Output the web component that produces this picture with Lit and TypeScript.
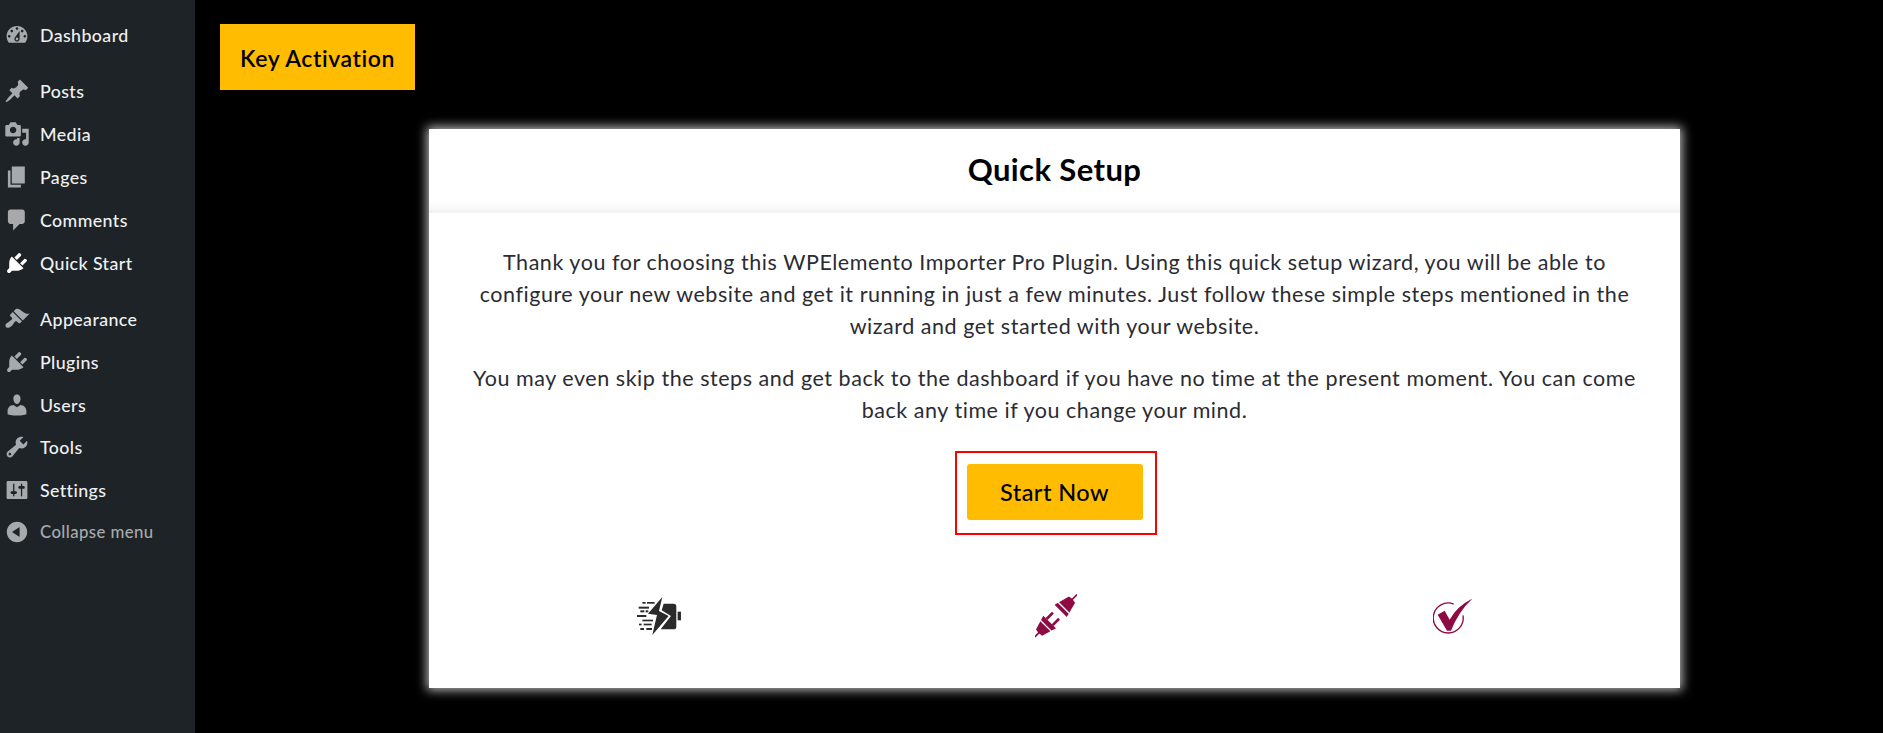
import { LitElement, html, css, svg } from "lit";
import { customElement } from "lit/decorators.js";

type Item = { label: string; d: string; cls?: string };
const P = {
  dash: "M3.76 16h12.48c1.1-1.37 1.76-3.11 1.76-5 0-4.42-3.58-8-8-8s-8 3.58-8 8c0 1.89.66 3.63 1.76 5zM10 4c.55 0 1 .45 1 1s-.45 1-1 1-1-.45-1-1 .45-1 1-1zM6 6c.55 0 1 .45 1 1s-.45 1-1 1-1-.45-1-1 .45-1 1-1zm8 0c.55 0 1 .45 1 1s-.45 1-1 1-1-.45-1-1 .45-1 1-1zm-5.37 5.55L12 7v6c0 1.1-.9 2-2 2s-2-.9-2-2c0-.57.24-1.08.63-1.45zM4 10c.55 0 1 .45 1 1s-.45 1-1 1-1-.45-1-1 .45-1 1-1zm12 0c.55 0 1 .45 1 1s-.45 1-1 1-1-.45-1-1 .45-1 1-1zm-5 3c0-.55-.45-1-1-1s-1 .45-1 1 .45 1 1 1 1-.45 1-1z",
  post: "M10.44 3.02l1.82-1.82 6.36 6.35-1.83 1.82c-1.05-.68-2.48-.57-3.41.36l-.75.75c-.92.93-1.04 2.35-.35 3.41l-1.83 1.82-2.41-2.41-2.8 2.79c-.42.42-3.38 2.71-3.8 2.29s1.86-3.39 2.28-3.81l2.79-2.79L4.1 9.36l1.83-1.82c1.05.69 2.48.57 3.4-.36l.75-.75c.93-.92 1.05-2.35.36-3.41z",
  media: "M13 11V4c0-.55-.45-1-1-1h-1.67L9 1H5L3.67 3H2c-.55 0-1 .45-1 1v7c0 .55.45 1 1 1h10c.55 0 1-.45 1-1zM7 4.5c1.38 0 2.5 1.12 2.5 2.5S8.38 9.5 7 9.5 4.5 8.38 4.5 7 5.62 4.5 7 4.5zM14 6h5v10.5c0 1.38-1.12 2.5-2.5 2.5S14 17.88 14 16.5s1.12-2.5 2.5-2.5c.17 0 .34.02.5.05V9h-3V6zm-4 8.05V13h2v3.5c0 1.38-1.12 2.5-2.5 2.5S7 17.88 7 16.5 8.12 14 9.5 14c.17 0 .34.02.5.05z",
  page: "M6 15V2h10v13H6zm-1 1h8v2H3V5h2v11z",
  comment: "M5 2h9c1.1 0 2 .9 2 2v7c0 1.1-.9 2-2 2h-2l-5 5v-5H5c-1.1 0-2-.9-2-2V4c0-1.1.9-2 2-2z",
  plugin: "M13.11 4.36L9.87 7.6 8 5.73l3.24-3.24c.35-.34 1.05-.2 1.56.32.52.51.66 1.21.31 1.55zm-8 1.77l.91-1.12 9.01 9.01-1.19.84c-.71.71-2.63 1.16-3.82 1.16H6.14L4.9 17.26c-.59.59-1.54.59-2.12 0-.59-.58-.59-1.53 0-2.12l1.24-1.24v-3.88c0-1.13.4-3.19 1.09-3.89zm7.26 3.97l3.24-3.24c.34-.35 1.04-.21 1.55.31.52.51.66 1.21.31 1.55l-3.24 3.25z",
  appearance: "M14.48 11.06L7.41 3.99l1.5-1.5c.5-.56 2.3-.47 3.51.32 1.21.8 1.43 1.28 2.91 2.1 1.18.64 2.45 1.26 4.45.85zm-.71.71L6.7 4.7 4.93 6.47c-.39.39-.39 1.02 0 1.41l1.06 1.06c.39.39.39 1.03 0 1.42-.6.6-1.43 1.11-2.21 1.69-.35.26-.7.53-1.01.84C1.43 13.23.5 15.13 1.65 16.28c1.16 1.16 3.05.22 4.4-1.12.31-.31.58-.66.84-1.01.58-.78 1.09-1.61 1.69-2.21.39-.39 1.02-.39 1.41 0l1.06 1.06c.39.39 1.02.39 1.41 0z",
  users: "M10 9.25c-2.27 0-2.73-3.44-2.73-3.44C7 4.02 7.82 2 9.97 2c2.16 0 2.98 2.02 2.71 3.81 0 0-.41 3.44-2.68 3.44zm0 2.57L12.72 10c2.39 0 4.52 2.33 4.52 4.53v2.49s-3.65 1.13-7.24 1.13c-3.65 0-7.24-1.13-7.24-1.13v-2.49c0-2.25 1.94-4.48 4.47-4.48z",
  tools: "M16.68 9.77c-1.34 1.34-3.3 1.67-4.95.99l-5.41 6.52c-.99.99-2.59.99-3.58 0s-.99-2.59 0-3.57l6.52-5.42c-.68-1.65-.35-3.61.99-4.95 1.28-1.28 3.12-1.62 4.72-1.06l-2.89 2.89 2.82 2.82 2.86-2.87c.53 1.58.18 3.39-1.08 4.65zM3.81 16.21c.4.39 1.04.39 1.43 0 .4-.4.4-1.04 0-1.43-.39-.4-1.03-.4-1.43 0-.39.39-.39 1.03 0 1.43z",
  settings: "M18 16V4c0-.55-.45-1-1-1H3c-.55 0-1 .45-1 1v12c0 .55.45 1 1 1h14c.55 0 1-.45 1-1zM8 11h1c.55 0 1 .45 1 1s-.45 1-1 1H8v1.5c0 .28-.22.5-.5.5s-.5-.22-.5-.5V13H6c-.55 0-1-.45-1-1s.45-1 1-1h1V5.5c0-.28.22-.5.5-.5s.5.22.5.5V11zm5-2h-1c-.55 0-1-.45-1-1s.45-1 1-1h1V5.5c0-.28.22-.5.5-.5s.5.22.5.5V7h1c.55 0 1 .45 1 1s-.45 1-1 1h-1v5.5c0 .28-.22.5-.5.5s-.5-.22-.5-.5V9z",
  collapse: "M10 2.16c4.33 0 7.84 3.51 7.84 7.84s-3.51 7.84-7.84 7.84S2.16 14.33 2.16 10 5.71 2.16 10 2.16zm2 11.72V6.12L6.18 9.97z",
};

const groups: Item[][] = [
  [{ label: "Dashboard", d: P.dash }],
  [
    { label: "Posts", d: P.post },
    { label: "Media", d: P.media },
    { label: "Pages", d: P.page },
    { label: "Comments", d: P.comment },
    { label: "Quick Start", d: P.plugin, cls: "cur" },
  ],
  [
    { label: "Appearance", d: P.appearance },
    { label: "Plugins", d: P.plugin },
    { label: "Users", d: P.users },
    { label: "Tools", d: P.tools },
    { label: "Settings", d: P.settings },
    { label: "Collapse menu", d: P.collapse, cls: "muted" },
  ],
];

@customElement("app-root")
export class AppRoot extends LitElement {
  static styles = css`
    :host { display: block; font-family: "Lato", "Noto Sans", sans-serif; }
    .page { display: flex; width: 1883px; height: 733px; background: #000; overflow: hidden; }
    .side { width: 195px; flex: none; background: #1d2327; padding-top: 14px; box-sizing: border-box; display: flex; flex-direction: column; gap: 13px; }
    .item { display: flex; align-items: center; height: 42.9px; color: #f0f0f1; font-size: 17.8px; font-weight: 500; letter-spacing: 0.4px; }
    .item svg { width: 26px; height: 26px; margin: 0 10px 0 4px; fill: #a7aaad; flex: none; }
    .item.cur svg { fill: #fff; }
    .item.muted { color: #a7aaad; font-size: 16.8px; height: 40px; }
    .main { flex: 1; min-width: 0; padding: 24px 0 0 25px; box-sizing: border-box; }
    .key { width: 195px; height: 66px; box-sizing: border-box; padding-top: 1px; background: #ffbc00; color: #000; font-size: 23px; font-weight: 600; letter-spacing: 0.58px; display: flex; align-items: center; justify-content: center; }
    .card { width: 1251px; height: 559px; margin: 39px 0 0 209px; background: #fff; box-shadow: 0 0 10px 2px rgba(255,255,255,.75); display: flex; flex-direction: column; }
    .head { height: 84px; flex: none; box-sizing: border-box; padding-bottom: 4px; display: flex; align-items: center; justify-content: center; font-size: 31px; font-weight: 700; color: #000; letter-spacing: 0.4px; box-shadow: inset 0 -14px 14px -14px rgba(0,0,0,.12); }
    .body { padding: 33px 30px 0; text-align: center; color: #2b2b33; font-size: 21.5px; line-height: 32px; letter-spacing: 0.54px; }
    .body p { margin: 0 0 20px; }
    .cta { display: flex; justify-content: center; }
    .redbox { border: 2px solid #f00; padding: 11px 12px 13px 10px; display: inline-flex; margin: 5px 0 0 2px; }
    .start { width: 176px; height: 56px; background: #ffbc00; border-radius: 3px; display: flex; align-items: center; justify-content: center; font-size: 23.5px; font-weight: 500; color: #000; letter-spacing: 0.45px; }
    .steps { display: grid; grid-template-columns: repeat(3, 396.5px); margin-top: 59px; padding-left: 32px; align-items: center; justify-items: center; height: 44px; }
    .s1 { width: 44.3px; height: 38px; fill: #2a2a2a; }
    .s2 { width: 42px; height: 43.3px; fill: #8e0a43; }
    .s3 { width: 39.3px; height: 36px; fill: #8e0a43; }
  `;

  render() {
    return html`<div class="page">
      <nav class="side">
        ${groups.map(
          (g) => html`<div>
            ${g.map(
              (i) => html`<div class="item ${i.cls ?? ""}">
                <svg viewBox="0 0 20 20"><path d=${i.d}></path></svg><span>${i.label}</span>
              </div>`
            )}
          </div>`
        )}
      </nav>
      <main class="main">
        <div class="key">Key Activation</div>
        <section class="card">
          <div class="head">Quick Setup</div>
          <div class="body">
            <p>Thank you for choosing this WPElemento Importer Pro Plugin. Using this quick setup wizard, you will be able to<br />configure your new website and get it running in just a few minutes. Just follow these simple steps mentioned in the<br />wizard and get started with your website.</p>
            <p>You may even skip the steps and get back to the dashboard if you have no time at the present moment. You can come<br />back any time if you change your mind.</p>
            <div class="cta"><div class="redbox"><div class="start">Start Now</div></div></div>
          </div>
          <div class="steps">
            <svg class="s1" viewBox="112 58 133 114">
              ${svg`<path d="M188 58 L145 108 L172 112 L158 172 L207 115 L178 100 Z"/>
              <path d="M192 78 H222 Q230 78 230 86 V147 Q230 155 222 155 H183 L214 115 L186 98 Z"/>
              <rect x="234" y="102" width="10" height="26"/>
              <rect x="128" y="73" width="10" height="5"/><rect x="142" y="73" width="23" height="5"/>
              <rect x="117" y="87" width="31" height="6"/><rect x="122" y="98" width="12" height="6"/><rect x="138" y="98" width="8" height="6"/>
              <rect x="112" y="112" width="28" height="6"/><rect x="128" y="126" width="32" height="5"/>
              <rect x="118" y="138" width="8" height="5"/><rect x="132" y="138" width="24" height="5"/>
              <rect x="122" y="151" width="11" height="6"/><rect x="140" y="151" width="17" height="6"/>`}
            </svg>
            <svg class="s2" viewBox="72 50 126 130">
              ${svg`<g transform="translate(135 115) rotate(-45)">
                <rect x="-90" y="-2.5" width="20" height="5"/>
                <path d="M-72 -13 L-27 -27 V27 L-72 13 Q-76 0 -72 -13 Z"/>
                <rect x="-45" y="-27" width="4" height="54" fill="#fff"/>
                <rect x="-27" y="-17" width="27" height="8"/><rect x="-27" y="9" width="27" height="8"/>
                <path d="M20 -26 L68 -13 Q72 0 68 13 L20 26 Z"/>
                <rect x="31" y="-26" width="4" height="52" fill="#fff"/>
                <rect x="68" y="-2.5" width="22" height="5"/>
              </g>`}
            </svg>
            <svg class="s3" viewBox="98 60 118 108">
              ${svg`<path d="M112 110 L133 98 L148 125 Q170 85 216 62 Q175 100 152 158 L140 158 Z"/>
              <path fill="none" stroke="#8e0a43" stroke-width="4" d="M160 78 A45 45 0 1 0 188 112"/>`}
            </svg>
          </div>
        </section>
      </main>
    </div>`;
  }
}
